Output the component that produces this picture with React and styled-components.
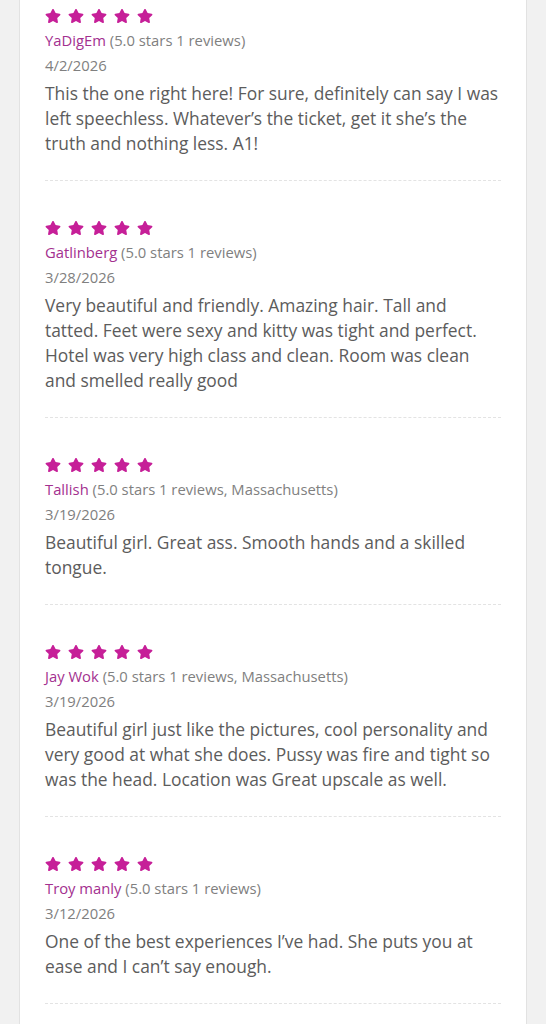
import React from "react";
import styled, { createGlobalStyle } from "styled-components";
import { FaStar } from "react-icons/fa";

const GlobalStyle = createGlobalStyle`
  body {
    margin: 0;
    background: #f1f1f1;
    font-family: "Open Sans", "Liberation Sans", sans-serif;
  }
`;

const Card = styled.div`
  margin: 0 19px;
  padding: 0 25px;
  background: #fff;
  border-left: 1px solid #e2e2e2;
  border-right: 1px solid #e2e2e2;
  min-height: 1024px;
  box-sizing: border-box;
`;

const Review = styled.div`
  padding: 35px 0 24px;
  border-bottom: 1px dashed #e3e3e3;

  &:first-child {
    padding-top: 4px;
  }
`;

const Stars = styled.div`
  display: flex;
  align-items: center;
  gap: 7px;
  height: 24px;
  color: #c61f98;
`;

const Meta = styled.div`
  font-size: 14.8px;
  line-height: 25px;
  color: #808080;
`;

const Name = styled.span`
  color: #a3308f;
`;

const Body = styled.p`
  margin: 3px 0 0;
  font-size: 17.4px;
  line-height: 25px;
  color: #5c5c5c;
`;

const reviews = [
  {
    name: "YaDigEm",
    info: "(5.0 stars 1 reviews)",
    date: "4/2/2026",
    text: "This the one right here! For sure, definitely can say I was left speechless. Whatever\u2019s the ticket, get it she\u2019s the truth and nothing less. A1!",
  },
  {
    name: "Gatlinberg",
    info: "(5.0 stars 1 reviews)",
    date: "3/28/2026",
    text: "Very beautiful and friendly. Amazing hair. Tall and tatted. Feet were sexy and kitty was tight and perfect. Hotel was very high class and clean. Room was clean and smelled really good",
  },
  {
    name: "Tallish",
    info: "(5.0 stars 1 reviews, Massachusetts)",
    date: "3/19/2026",
    text: "Beautiful girl. Great ass. Smooth hands and a skilled tongue.",
  },
  {
    name: "Jay Wok",
    info: "(5.0 stars 1 reviews, Massachusetts)",
    date: "3/19/2026",
    text: "Beautiful girl just like the pictures, cool personality and very good at what she does. Pussy was fire and tight so was the head. Location was Great upscale as well.",
  },
  {
    name: "Troy manly",
    info: "(5.0 stars 1 reviews)",
    date: "3/12/2026",
    text: "One of the best experiences I\u2019ve had. She puts you at ease and I can\u2019t say enough.",
  },
];

export default function App() {
  return (
    <>
      <GlobalStyle />
      <Card>
        {reviews.map((r) => (
          <Review key={r.name}>
            <Stars>
              {[0, 1, 2, 3, 4].map((i) => (
                <FaStar key={i} size={16} />
              ))}
            </Stars>
            <Meta>
              <Name>{r.name}</Name> {r.info}
            </Meta>
            <Meta>{r.date}</Meta>
            <Body>{r.text}</Body>
          </Review>
        ))}
      </Card>
    </>
  );
}
